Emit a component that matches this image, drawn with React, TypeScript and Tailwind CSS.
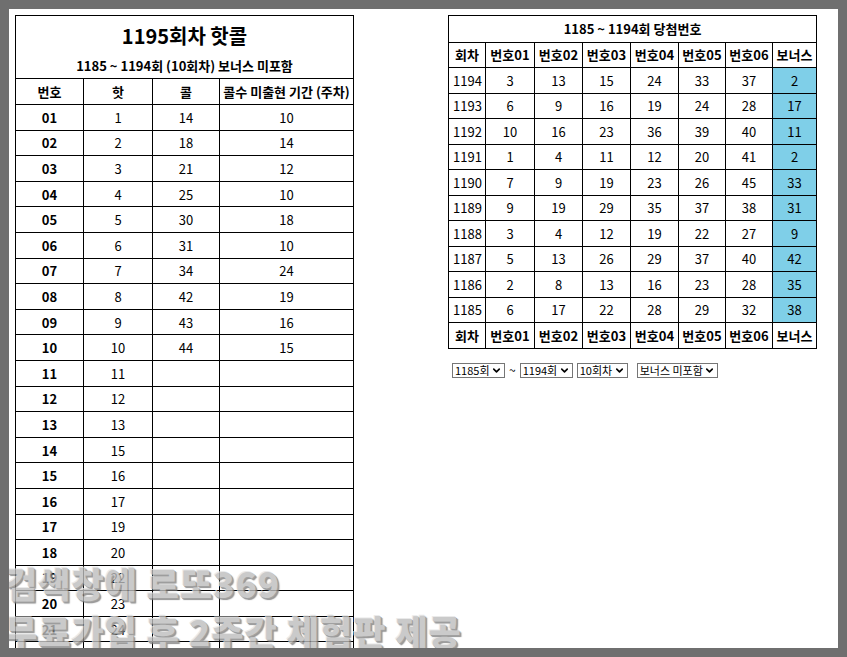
import { ChevronDown } from "lucide-react";

const hotCold: [string, string, string, string][] = [
	["01", "1", "14", "10"],
	["02", "2", "18", "14"],
	["03", "3", "21", "12"],
	["04", "4", "25", "10"],
	["05", "5", "30", "18"],
	["06", "6", "31", "10"],
	["07", "7", "34", "24"],
	["08", "8", "42", "19"],
	["09", "9", "43", "16"],
	["10", "10", "44", "15"],
	["11", "11", "", ""],
	["12", "12", "", ""],
	["13", "13", "", ""],
	["14", "15", "", ""],
	["15", "16", "", ""],
	["16", "17", "", ""],
	["17", "19", "", ""],
	["18", "20", "", ""],
	["19", "22", "", ""],
	["20", "23", "", ""],
	["21", "24", "", ""],
	["22", "26", "", ""],
];

const draws: [string, number[], number][] = [
	["1194", [3, 13, 15, 24, 33, 37], 2],
	["1193", [6, 9, 16, 19, 24, 28], 17],
	["1192", [10, 16, 23, 36, 39, 40], 11],
	["1191", [1, 4, 11, 12, 20, 41], 2],
	["1190", [7, 9, 19, 23, 26, 45], 33],
	["1189", [9, 19, 29, 35, 37, 38], 31],
	["1188", [3, 4, 12, 19, 22, 27], 9],
	["1187", [5, 13, 26, 29, 37, 40], 42],
	["1186", [2, 8, 13, 16, 23, 28], 35],
	["1185", [6, 17, 22, 28, 29, 32], 38],
];

const heads = ["회차", "번호01", "번호02", "번호03", "번호04", "번호05", "번호06", "보너스"];

function FakeSelect({ label, width }: { label: string; width: string }) {
	return (
		<span
			className={`inline-flex h-[15px] items-center justify-between border border-[#767676] bg-white pl-[2px] pr-[2px] text-[11px] leading-none text-black ${width}`}
		>
			<span>{label}</span>
			<ChevronDown size={11} strokeWidth={3.5} aria-hidden="true" />
		</span>
	);
}

export default function App() {
	return (
		<div className="h-[657px] w-[847px] bg-[#6f6f6f] p-[9px] font-['Noto_Sans_CJK_KR','Noto_Sans',sans-serif] text-black">
			<div className="relative flex h-[639px] w-[829px] items-start gap-[94px] overflow-hidden bg-white pl-[6px] pt-[6px]">
				<table className="w-[339px] table-fixed border-collapse text-[13px]">
					<colgroup>
						<col className="w-[68px]" />
						<col className="w-[69px]" />
						<col className="w-[67px]" />
						<col />
					</colgroup>
					<thead>
						<tr className="h-[37px]">
							<th colSpan={4} className="border-x border-t border-black pt-[4px] text-[20px] font-bold leading-none">
								1195회차 핫콜
							</th>
						</tr>
						<tr className="h-[26px]">
							<th colSpan={4} className="border-x border-b border-black text-[13px] font-bold leading-none">
								1185 ~ 1194회 (10회차) 보너스 미포함
							</th>
						</tr>
						<tr className="h-[26px]">
							{["번호", "핫", "콜", "콜수 미출현 기간 (주차)"].map((h) => (
								<th key={h} className="border border-black font-bold leading-none">
									{h}
								</th>
							))}
						</tr>
					</thead>
					<tbody>
						{hotCold.map(([no, hot, cold, weeks]) => (
							<tr key={no} className="h-[25.6px]">
								<td className="border border-black text-center font-bold leading-none">{no}</td>
								<td className="border border-black text-center leading-none">{hot}</td>
								<td className="border border-black text-center leading-none">{cold}</td>
								<td className="border border-black text-center leading-none">{weeks}</td>
							</tr>
						))}
					</tbody>
				</table>

				<div className="flex flex-col">
					<table className="w-[369px] table-fixed border-collapse text-[13px]">
						<colgroup>
							<col className="w-[37px]" />
							<col className="w-[49px]" />
							<col className="w-[48px]" />
							<col className="w-[48px]" />
							<col className="w-[48px]" />
							<col className="w-[47px]" />
							<col className="w-[47px]" />
							<col />
						</colgroup>
						<thead>
							<tr className="h-[26.7px]">
								<th colSpan={8} className="border border-black font-bold leading-none">
									1185 ~ 1194회 당첨번호
								</th>
							</tr>
							<tr className="h-[25.5px]">
								{heads.map((h) => (
									<th key={h} className="border border-black px-0 font-bold leading-none">
										{h}
									</th>
								))}
							</tr>
						</thead>
						<tbody>
							{draws.map(([round, nums, bonus]) => (
								<tr key={round} className="h-[25.5px]">
									<td className="border border-black pl-[4px] text-left leading-none">{round}</td>
									{nums.map((n, i) => (
										<td key={i} className="border border-black text-center leading-none">
											{n}
										</td>
									))}
									<td className="border border-black bg-[#7fcfe8] text-center leading-none">{bonus}</td>
								</tr>
							))}
						</tbody>
						<tfoot>
							<tr className="h-[25.5px]">
								{heads.map((h) => (
									<th key={h} className="border border-black px-0 font-bold leading-none">
										{h}
									</th>
								))}
							</tr>
						</tfoot>
					</table>

					<div className="mt-[14px] flex items-center pl-[4px]">
						<FakeSelect label="1185회" width="w-[53px]" />
						<span className="mx-[4px] text-[12px] leading-none">~</span>
						<FakeSelect label="1194회" width="w-[53px]" />
						<span className="w-[4px]" />
						<FakeSelect label="10회차" width="w-[51px]" />
						<span className="w-[9px]" />
						<FakeSelect label="보너스 미포함" width="w-[81px]" />
					</div>
				</div>

				<div className="pointer-events-none absolute left-[-4px] top-[550px] flex flex-col text-[35px] font-black leading-[48px] tracking-[1px] text-[#bdbdbd] opacity-80 [text-shadow:1px_1px_0_#8a8a8a,2px_2px_1px_#7a7a7a,-1px_-1px_0_#e6e6e6]">
					<span>검색창에 로또369</span>
					<span>무료가입 후 2주간 체험판 제공</span>
				</div>
			</div>
		</div>
	);
}
